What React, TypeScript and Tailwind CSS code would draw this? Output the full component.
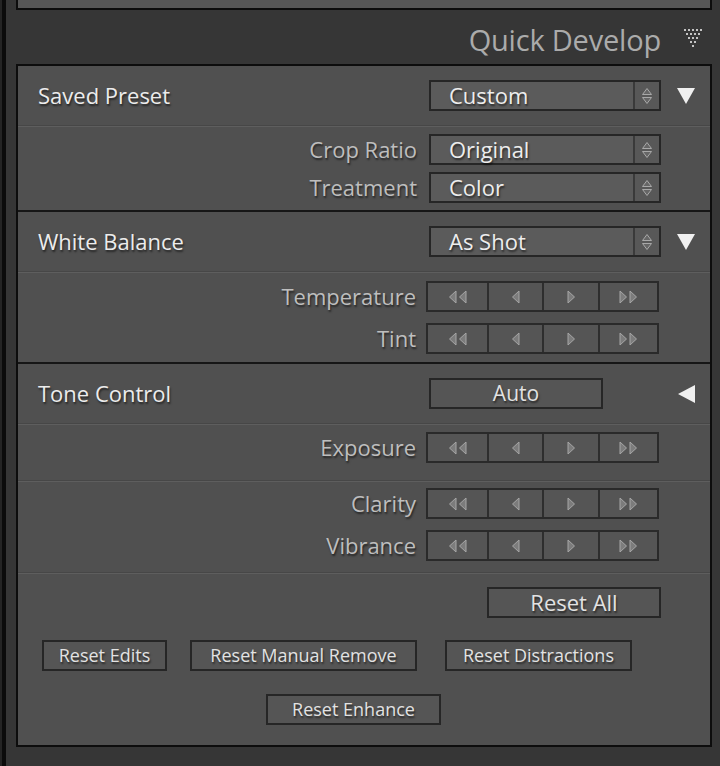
import React from 'react';

const font = { fontFamily: '"Open Sans", "Liberation Sans", sans-serif' };

const shadow = '[text-shadow:1px_2px_2px_rgba(0,0,0,0.55)]';

function UpDown() {
  return (
    <svg width="12" height="18" viewBox="0 0 12 18">
      <polygon points="6,1.5 10.5,7.5 1.5,7.5" fill="#666" stroke="#a8a8a8" strokeWidth="1" />
      <polygon points="6,16.5 10.5,10.5 1.5,10.5" fill="#666" stroke="#a8a8a8" strokeWidth="1" />
    </svg>
  );
}

function Select({ value }: { value: string }) {
  return (
    <div className="flex h-[31px] w-[232px] border-2 border-[#262626] bg-[#5b5b5b]">
      <div className={`flex flex-1 items-center pl-[18px] text-[22px] text-[#ededed] ${shadow}`}>{value}</div>
      <div className="flex w-[26px] items-center justify-center border-l-2 border-[#3a3a3a] bg-[#585858]">
        <UpDown />
      </div>
    </div>
  );
}

function Tri({ dir }: { dir: 'l' | 'r' }) {
  const pts = dir === 'l' ? '8,1 8,13 1.5,7' : '1,1 1,13 7.5,7';
  return (
    <svg width="9" height="14" viewBox="0 0 9 14">
      <polygon points={pts} fill="#7c7c7c" stroke="#a6a6a6" strokeWidth="1" />
    </svg>
  );
}

function Stepper() {
  return (
    <div className="flex h-[31px] w-[233px] border-2 border-[#2a2a2a] bg-[#555555]">
      <div className="flex w-[59px] items-center justify-center gap-[1px]">
        <Tri dir="l" />
        <Tri dir="l" />
      </div>
      <div className="flex w-[55px] items-center justify-center border-l-2 border-[#2e2e2e]">
        <Tri dir="l" />
      </div>
      <div className="flex w-[56px] items-center justify-center border-l-2 border-[#2e2e2e]">
        <Tri dir="r" />
      </div>
      <div className="flex flex-1 items-center justify-center gap-[1px] border-l-2 border-[#2e2e2e]">
        <Tri dir="r" />
        <Tri dir="r" />
      </div>
    </div>
  );
}

function Button({ label, className }: { label: string; className: string }) {
  return (
    <div
      className={`flex items-center justify-center border-2 border-[#262626] bg-[#555555] text-[#e2e2e2] ${shadow} ${className}`}
    >
      {label}
    </div>
  );
}

function Separator() {
  return (
    <div>
      <div className="h-px bg-[#474747]" />
      <div className="h-px bg-[#5e5e5e]" />
    </div>
  );
}

function HeaderRow({ title, children, arrow }: { title: string; children: React.ReactNode; arrow: 'down' | 'left' }) {
  return (
    <div className="flex h-[59px] items-center">
      <div className={`flex-1 pl-[20px] text-[22px] text-[#ececec] ${shadow}`}>{title}</div>
      <div className="w-[232px]">{children}</div>
      <div className="flex w-[49px] items-center justify-center">
        {arrow === 'down' ? (
          <svg width="18" height="18" viewBox="0 0 18 18">
            <polygon points="0,1 18,1 9,17" fill="#f0f0f0" />
          </svg>
        ) : (
          <svg width="18" height="18" viewBox="0 0 18 18">
            <polygon points="18,0 18,18 1,9" fill="#f0f0f0" />
          </svg>
        )}
      </div>
    </div>
  );
}

function SubRow({ label, children }: { label: string; children: React.ReactNode }) {
  return (
    <div className="flex h-[31px] items-center">
      <div className={`flex-1 pr-[12px] text-right text-[22px] text-[#bebebe] ${shadow}`}>{label}</div>
      <div className="w-[232px]">{children}</div>
      <div className="w-[49px]" />
    </div>
  );
}

function StepRow({ label }: { label: string }) {
  return (
    <div className="flex h-[31px] items-center">
      <div className={`flex-1 pr-[10px] text-right text-[22px] text-[#bebebe] ${shadow}`}>{label}</div>
      <div className="w-[233px]">
        <Stepper />
      </div>
      <div className="w-[51px]" />
    </div>
  );
}

function QuickDevelopIcon() {
  const rows = [5, 4, 3, 2, 1];
  return (
    <svg width="18" height="20" viewBox="0 0 18 20">
      {rows.map((n, r) =>
        Array.from({ length: n }).map((_, i) => (
          <rect key={`${r}-${i}`} x={r * 2 + i * 4} y={r * 4} width="2" height="2" fill="#c4c4c4" />
        ))
      )}
    </svg>
  );
}

export default function App() {
  return (
    <div className="flex h-[766px] w-[720px] overflow-hidden bg-[#363636]" style={font}>
      <div className="w-[2px] bg-[#242424]" />
      <div className="w-[4px] bg-[#0b0b0b]" />
      <div className="flex flex-1 flex-col pl-[10px] pr-[8px]">
        {/* previous panel bottom */}
        <div className="h-[10px] border-x-2 border-b-2 border-[#0d0d0d] bg-[#575757]" />

        {/* panel title */}
        <div className="flex h-[54px] items-center justify-end pt-[6px]">
          <span className="text-[29px] tracking-[-0.2px] text-[#ababab]">Quick Develop</span>
          <div className="ml-[23px] mr-[10px] mt-[-2px]">
            <QuickDevelopIcon />
          </div>
        </div>

        {/* panel */}
        <div className="flex flex-col border-2 border-[#0d0d0d] bg-[#505050]">
          {/* Saved Preset */}
          <HeaderRow title="Saved Preset" arrow="down">
            <Select value="Custom" />
          </HeaderRow>
          <Separator />
          <div className="flex flex-col gap-[7px] pb-[7px] pt-[7px]">
            <SubRow label="Crop Ratio">
              <Select value="Original" />
            </SubRow>
            <SubRow label="Treatment">
              <Select value="Color" />
            </SubRow>
          </div>
          <div className="h-[2px] bg-[#161616]" />

          {/* White Balance */}
          <HeaderRow title="White Balance" arrow="down">
            <Select value="As Shot" />
          </HeaderRow>
          <Separator />
          <div className="flex flex-col gap-[11px] pb-[8px] pt-[8px]">
            <StepRow label="Temperature" />
            <StepRow label="Tint" />
          </div>
          <div className="h-[2px] bg-[#161616]" />

          {/* Tone Control */}
          <HeaderRow title="Tone Control" arrow="left">
            <Button label="Auto" className="h-[31px] w-[174px] text-[21px]" />
          </HeaderRow>
          <Separator />
          <div className="flex flex-col pb-[17px] pt-[7px]">
            <StepRow label="Exposure" />
          </div>
          <Separator />
          <div className="flex flex-col gap-[11px] pb-[11px] pt-[6px]">
            <StepRow label="Clarity" />
            <StepRow label="Vibrance" />
          </div>
          <Separator />
          <div className="flex justify-end pr-[49px] pt-[13px]">
            <Button label="Reset All" className="h-[31px] w-[174px] text-[22px]" />
          </div>
          <div className="flex pl-[24px] pt-[22px]">
            <Button label="Reset Edits" className="h-[31px] w-[125px] text-[18px]" />
            <Button label="Reset Manual Remove" className="ml-[23px] h-[31px] w-[227px] text-[18px]" />
            <Button label="Reset Distractions" className="ml-[28px] h-[31px] w-[187px] text-[18px]" />
          </div>
          <div className="flex pb-[20px] pl-[248px] pt-[23px]">
            <Button label="Reset Enhance" className="h-[31px] w-[175px] text-[18px]" />
          </div>
        </div>
      </div>
    </div>
  );
}
